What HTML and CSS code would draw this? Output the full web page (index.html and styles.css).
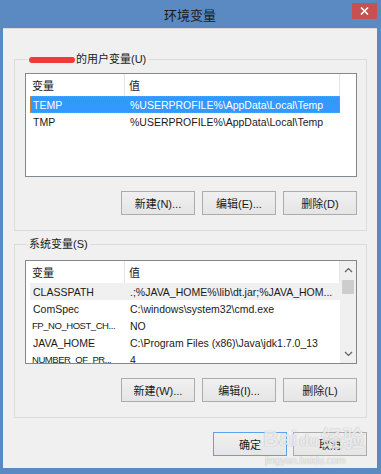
FILE: index.html
```html
<!DOCTYPE html>
<html lang="zh-CN">
<head>
  <meta charset="UTF-8" />
  <title>环境变量</title>
  <link rel="stylesheet" href="styles.css">
</head>
<body>

  <div class="window">
    <div class="titlebar">
      <div class="title">环境变量</div>
      <div class="close">
        <svg width="9" height="8" viewBox="0 0 9 8"><path d="M1 0.5 L8 7.5 M8 0.5 L1 7.5" stroke="#fff" stroke-width="1.6"/></svg>
      </div>
    </div>

    <div class="client">
      <fieldset class="group group-user">
        <legend><span class="redact"></span>的用户变量(U)</legend>
        <div class="list">
          <div class="list-body">
            <div class="list-head">
              <div class="col-name">变量</div>
              <div class="col-value">值</div>
            </div>
            <div class="row selected">
              <div>TEMP</div>
              <div>%USERPROFILE%\AppData\Local\Temp</div>
            </div>
            <div class="row">
              <div>TMP</div>
              <div>%USERPROFILE%\AppData\Local\Temp</div>
            </div>
          </div>
        </div>
        <div class="buttons">
          <button class="btn">新建(N)...</button>
          <button class="btn">编辑(E)...</button>
          <button class="btn">删除(D)</button>
        </div>
      </fieldset>

      <fieldset class="group group-system">
        <legend>系统变量(S)</legend>
        <div class="list">
          <div class="list-body">
            <div class="list-head">
              <div class="col-name">变量</div>
              <div class="col-value">值</div>
            </div>
            <div class="row hover">
              <div>CLASSPATH</div>
              <div>.;%JAVA_HOME%\lib\dt.jar;%JAVA_HOM...</div>
            </div>
            <div class="row">
              <div>ComSpec</div>
              <div>C:\windows\system32\cmd.exe</div>
            </div>
            <div class="row">
              <div class="trunc">FP_NO_HOST_CH...</div>
              <div>NO</div>
            </div>
            <div class="row">
              <div>JAVA_HOME</div>
              <div>C:\Program Files (x86)\Java\jdk1.7.0_13</div>
            </div>
            <div class="row">
              <div class="trunc">NUMBER_OF_PR...</div>
              <div>4</div>
            </div>
          </div>
          <div class="scrollbar">
            <svg class="arrow" width="9" height="6" viewBox="0 0 9 6"><path d="M1 5 L4.5 1.5 L8 5" fill="none" stroke="#606060" stroke-width="1.2"/></svg>
            <div class="thumb"></div>
            <div class="track"></div>
            <svg class="arrow" width="9" height="6" viewBox="0 0 9 6"><path d="M1 1 L4.5 4.5 L8 1" fill="none" stroke="#606060" stroke-width="1.2"/></svg>
          </div>
        </div>
        <div class="buttons">
          <button class="btn">新建(W)...</button>
          <button class="btn">编辑(I)...</button>
          <button class="btn">删除(L)</button>
        </div>
      </fieldset>

      <div class="footer">
        <button class="btn default">确定</button>
        <button class="btn">取消</button>
      </div>
    </div>

    <div class="watermark">
      <div class="wm-logo">Bai<span class="wm-du">du</span>经验</div>
      <div class="wm-url">jingyan.baidu.com</div>
    </div>
  </div>

</body>
</html>
```

FILE: styles.css
```css
body {
  margin: 0;
  font-family: "Liberation Sans", "Noto Sans CJK SC", sans-serif;
  font-size: 11px;
  color: #1a1a1a;
}
.window {
  width: 381px;
  height: 474px;
  box-sizing: border-box;
  background: #5b8ac3;
  padding: 0 4px 6px 3px;
  display: flex;
  flex-direction: column;
  position: relative;
}
.titlebar {
  height: 28px;
  display: grid;
  grid-template-columns: 1fr auto 1fr;
  align-items: center;
}
.title {
  grid-column: 2;
  font-family: "Noto Sans CJK SC", sans-serif;
  font-size: 13px;
  color: #1a1a1a;
}
.close {
  grid-column: 3;
  justify-self: end;
  align-self: start;
  margin-top: 3px;
  width: 25px;
  height: 16px;
  background: #c75050;
  display: flex;
  align-items: center;
  justify-content: center;
}
.client {
  flex: 1;
  background: #f0f0f0;
  border-top: 1px solid #dcdcdc;
  display: flex;
  flex-direction: column;
}
.group {
  margin: 22px 10px 0 11px;
  padding: 6px 9px 15px 10px;
  border: 1px solid #dcdcdc;
  min-width: 0;
}
.group-system {
  margin-top: 5px;
  padding-top: 8px;
}
.group legend {
  padding: 0 2px 0 1px;
  margin-left: 3px;
  line-height: 16px;
}
.redact {
  display: inline-block;
  width: 46px;
  height: 6px;
  margin-right: 1px;
  vertical-align: middle;
  background: #f03a3a;
  border-radius: 3px;
}
.list {
  height: 104px;
  box-sizing: border-box;
  border: 1px solid #828790;
  background: #fff;
  display: flex;
  overflow: hidden;
}
.list-body {
  flex: 1;
  min-width: 0;
}
.list-head {
  display: grid;
  grid-template-columns: 99px 215px;
  height: 22px;
  align-items: center;
}
.list-head .col-name {
  padding-left: 6px;
  border-right: 1px solid #e5e5e5;
  height: 100%;
  display: flex;
  align-items: center;
}
.list-head .col-value {
  padding-left: 4px;
  border-right: 1px solid #e5e5e5;
  height: 100%;
  display: flex;
  align-items: center;
}
.row {
  display: grid;
  grid-template-columns: 95px 215px;
  width: 310px;
  height: 17px;
  margin-left: 4px;
  box-sizing: border-box;
  align-items: center;
  white-space: nowrap;
  font-size: 10.5px;
}
.row div {
  overflow: hidden;
}
.row div:first-child {
  padding-left: 3px;
}
.row div:last-child {
  padding-left: 5px;
}
.row .trunc {
  font-size: 9.5px;
  letter-spacing: -0.45px;
}
.row div.trunc:first-child {
  padding-left: 2px;
}
.row.selected {
  background: #3399ff;
  color: #fff;
  outline: 1px dotted #d08a3c;
  outline-offset: -1px;
}
.row.hover {
  background: #f0f0f0;
}
.scrollbar {
  width: 16px;
  background: #f0f0f0;
  display: flex;
  flex-direction: column;
  align-items: center;
}
.scrollbar .arrow {
  margin: 6px 0;
}
.thumb {
  width: 12px;
  height: 14px;
  background: #cdcdcd;
  margin-top: 1px;
}
.track {
  flex: 1;
}
.buttons {
  display: flex;
  justify-content: flex-end;
  gap: 7px;
  margin-top: 14px;
}
.btn {
  width: 74px;
  height: 24px;
  border: 1px solid #acacac;
  background: linear-gradient(#f0f0f0, #e5e5e5);
  font-family: "Liberation Sans", "Noto Sans CJK SC", sans-serif;
  font-size: 11px;
  color: #1a1a1a;
  padding: 0;
}
.btn.default {
  border-color: #5aa2f0;
}
.footer {
  display: flex;
  justify-content: flex-end;
  gap: 6px;
  margin: 14px 10px 0 0;
}
.watermark {
  position: absolute;
  left: 263px;
  top: 424px;
  color: rgba(255, 255, 255, 0.8);
  text-shadow: 0 0 1px rgba(0, 0, 0, 0.35);
  pointer-events: none;
}
.wm-logo {
  font-family: "Liberation Sans", "Noto Sans CJK SC", sans-serif;
  font-size: 22px;
  font-weight: bold;
  line-height: 30px;
}
.wm-du {
  font-size: 16px;
  margin: 0 2px;
}
.wm-url {
  font-family: "Liberation Sans", sans-serif;
  font-size: 10px;
  line-height: 10px;
  margin-left: 2px;
}
```
